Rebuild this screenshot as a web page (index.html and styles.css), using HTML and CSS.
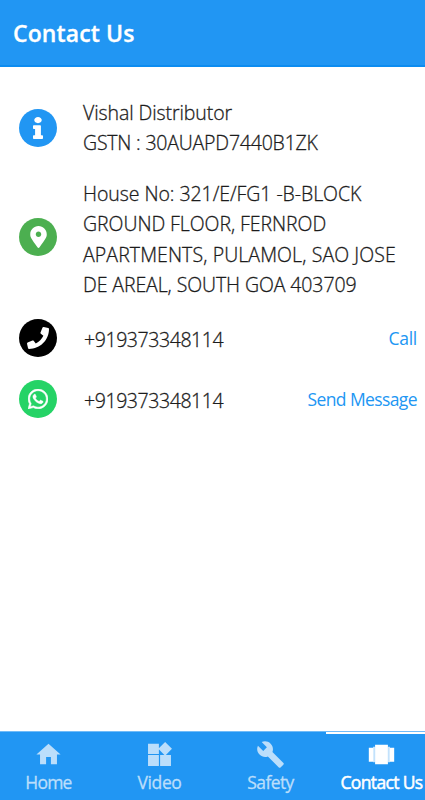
FILE: index.html
```html
<!DOCTYPE html>
<html lang="en">
<head>
<meta charset="utf-8">
<title>Contact Us</title>
<link rel="stylesheet" href="styles.css">
</head>
<body>
<header class="header"><h1 class="title">Contact Us</h1></header>
<main class="content">
  <section class="row row-info">
    <span class="badge blue"><svg width="10" height="22" viewBox="0 0 192 512" preserveAspectRatio="none" fill="#fff"><path d="M20 424.200h20V279.800H20c-11 0-20-9-20-20V212c0-11 9-20 20-20h112c11 0 20 9 20 20v212.200h20c11 0 20 9 20 20V492c0 11-9 20-20 20H20c-11 0-20-9-20-20v-47.800c0-11 9-20 20-20zM96 0C56.200 0 24 32.200 24 72s32.200 72 72 72 72-32.200 72-72S135.800 0 96 0z"/></svg></span>
    <div class="text"><p class="l1">Vishal Distributor</p><p class="l2">GSTN : 30AUAPD7440B1ZK</p></div>
  </section>
  <section class="row row-address">
    <span class="badge green"><svg width="17" height="22" viewBox="0 0 384 512" fill="#fff"><path d="M172.300 501.700C27 291 0 269.400 0 192 0 86 86 0 192 0s192 86 192 192c0 77.400-27 99-172.300 309.700-9.500 13.800-29.900 13.800-39.400 0zM192 256c35 0 64-29 64-64s-29-64-64-64-64 29-64 64 29 64 64 64z"/></svg></span>
    <div class="text"><p class="l3">House No: 321/E/FG1 -B-BLOCK</p><p class="l4">GROUND FLOOR, FERNROD</p><p class="l5">APARTMENTS, PULAMOL, SAO JOSE</p><p class="l6">DE AREAL, SOUTH GOA 403709</p></div>
  </section>
  <section class="row row-phone">
    <span class="badge black"><svg width="22" height="22" viewBox="0 0 512 512" fill="#fff"><path d="M493.400 24.600l-104-24c-11.300-2.600-22.900 3.300-27.500 13.900l-48 112c-4.200 9.800-1.400 21.300 6.900 28l60.600 49.600c-36 76.700-98.900 140.500-177.200 177.200l-49.600-60.600c-6.800-8.300-18.200-11.100-28-6.900l-112 48C3.900 366.500-2 378.100.600 389.400l24 104C27.100 504.200 36.700 512 48 512c256.100 0 464-207.500 464-464 0-11.200-7.700-20.900-18.600-23.400z"/></svg></span>
    <div class="text"><p class="num">+919373348114</p></div><a class="action call">Call</a>
  </section>
  <section class="row row-phone">
    <span class="badge whatsapp"><svg width="20" height="20" viewBox="0 32 448 448" fill="#fff" stroke="#fff" stroke-width="12"><path d="M380.900 97.100C339 55.100 283.200 32 223.900 32c-122.400 0-222 99.600-222 222 0 39.100 10.200 77.300 29.600 111L0 480l117.700-30.900c32.400 17.700 68.900 27 106.100 27h.1c122.300 0 224.100-99.600 224.100-222 0-59.300-25.200-115-67.100-157zm-157 341.600c-33.200 0-65.700-8.900-94-25.700l-6.700-4-69.800 18.300L72 359.200l-4.400-7c-18.500-29.400-28.200-63.300-28.200-98.200 0-101.700 82.800-184.500 184.600-184.500 49.300 0 95.600 19.200 130.400 54.100 34.800 34.900 56.200 81.200 56.100 130.500 0 101.800-84.900 184.600-186.600 184.600zm101.200-138.200c-5.500-2.800-32.800-16.200-37.900-18-5.100-1.900-8.800-2.800-12.500 2.800-3.700 5.600-14.300 18-17.600 21.800-3.200 3.700-6.500 4.200-12 1.400-32.600-16.300-54-29.100-75.500-66-5.700-9.800 5.700-9.100 16.300-30.300 1.800-3.700.9-6.900-.5-9.700-1.400-2.800-12.500-30.100-17.100-41.200-4.500-10.800-9.100-9.300-12.500-9.500-3.200-.2-6.900-.2-10.600-.2-3.700 0-9.700 1.400-14.800 6.900-5.100 5.600-19.400 19-19.400 46.300 0 27.300 19.900 53.700 22.600 57.400 2.800 3.700 39.100 59.700 94.800 83.800 35.200 15.200 49 16.500 66.600 13.900 10.700-1.600 32.800-13.400 37.400-26.400 4.600-13 4.600-24.100 3.200-26.400-1.300-2.500-5-3.900-10.500-6.600z"/></svg></span>
    <div class="text"><p class="num">+919373348114</p></div><a class="action send">Send Message</a>
  </section>
</main>
<nav class="tabs">
  <a class="tab"><svg width="29" height="29" viewBox="0 0 24 24" fill="currentColor"><path d="M10 20v-6h4v6h5v-8h3L12 3 2 12h3v8z"/></svg><span class="t-home">Home</span></a>
  <a class="tab"><svg width="29" height="29" viewBox="0 0 24 24" fill="currentColor"><path d="M12.500 12.500v9h9v-9h-9zM2.500 21.500h9v-9h-9v9zM2.500 3v8.500h9V3h-9zm14.160-1.310L11 7.340 16.660 13l5.660-5.660-5.660-5.650z"/></svg><span class="t-video">Video</span></a>
  <a class="tab"><svg width="29" height="29" viewBox="0 0 24 24" fill="currentColor"><path d="M22.700 19l-9.100-9.100c.9-2.300.4-5-1.500-6.900-2-2-5-2.400-7.400-1.300L9 6 6 9 1.600 4.700C.4 7.100.9 10.100 2.900 12.100c1.900 1.900 4.600 2.400 6.900 1.500l9.100 9.100c.4.400 1 .4 1.400 0l2.300-2.300c.5-.4.5-1.100.1-1.400z"/></svg><span class="t-safety">Safety</span></a>
  <a class="tab active"><svg width="29" height="29" viewBox="0 0 24 24"><path fill="#c3e2fc" d="M5 5.500h2v13H5zM17 5.500h2v13h-2z"/><path fill="#fff" d="M6.700 4h10.600v16H6.700zM1.500 6.500H5.300v11.500H1.500zM18.700 6.500H22.500v11.500h-3.800z"/></svg><span class="t-contact">Contact Us</span></a>
</nav>
</body>
</html>
```
FILE: styles.css
```css
* { box-sizing: border-box; }
body {
  margin: 0;
  height: 800px;
  display: flex;
  flex-direction: column;
  overflow: hidden;
  background: #fff;
  color: #1c1c1c;
  font-family: "Open Sans", "Noto Sans", sans-serif;
}
h1, p { margin: 0; }
.header {
  height: 67px;
  padding-left: 13px;
  display: flex;
  align-items: center;
  background: #2196f3;
  border-bottom: 2px solid #0c8cf0;
}
.title {
  color: #fff;
  font-size: 23px;
  font-weight: 650;
  line-height: 32px;
  letter-spacing: 0.1px;
  -webkit-text-stroke: 0.3px #fff;
}
.content { flex: 1; padding: 31px 8px 0 19px; }
.row { display: flex; align-items: center; }
.row-info { margin-bottom: 18px; }
.row-address { margin-bottom: 9px; }
.row-address .text, .row-phone .text { padding-top: 2px; margin-bottom: -2px; }
.row-phone { height: 61px; }
.badge {
  width: 38px;
  height: 38px;
  flex: none;
  border-radius: 50%;
  display: flex;
  align-items: center;
  justify-content: center;
}
.row-address .badge { margin-bottom: 1px; }
.blue { background: #2196f3; }
.green { background: #4caf50; }
.black { background: #000; }
.whatsapp { background: #25d366; }
.text {
  flex: 1;
  margin-left: 26px;
  font-size: 19.5px;
  font-weight: 350;
  line-height: 30.4px;
  white-space: nowrap;
  -webkit-text-stroke: 0.3px currentColor;
}
.l1 { letter-spacing: -0.08px; }
.l2 { letter-spacing: -0.2px; }
.l3 { letter-spacing: -0.06px; }
.l4 { letter-spacing: -0.06px; }
.l5 { letter-spacing: 0.1px; }
.l6 { letter-spacing: -0.1px; }
.num { padding-left: 1px; letter-spacing: -0.42px; }
.action { padding-top: 1px; color: #2196f3; font-size: 17.5px; white-space: nowrap; }
.call { letter-spacing: -0.3px; }
.send { letter-spacing: -0.6px; }
.tabs {
  height: 69px;
  margin-left: -7px;
  width: 444px;
  display: flex;
  flex: none;
  background: #2196f3;
  border-top: 1px solid #70bbf8;
}
.tab {
  width: 111px;
  display: flex;
  flex-direction: column;
  align-items: center;
  padding-top: 8px;
  color: #bbdefb;
  font-size: 17.5px;
  line-height: 27px;
  white-space: nowrap;
}
.tab span { -webkit-text-stroke: 0.3px currentColor; }
.t-home { letter-spacing: -0.8px; }
.t-video { letter-spacing: -0.4px; }
.t-safety { letter-spacing: -0.6px; }
.t-contact { letter-spacing: -0.65px; }
.tab .t-contact { -webkit-text-stroke-width: 0.5px; }
.active { color: #fff; box-shadow: inset 0 2px #fff; }
```
